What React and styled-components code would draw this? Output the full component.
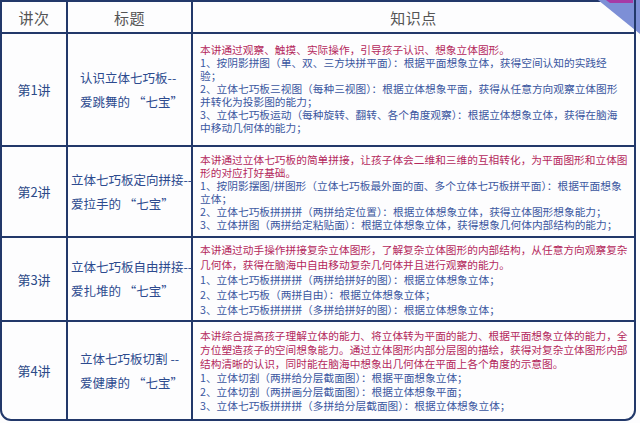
import React from "react";
import styled, { createGlobalStyle } from "styled-components";

const GlobalStyle = createGlobalStyle`
  html, body {
    margin: 0;
    padding: 0;
    background: #fdfdfe;
  }
  * {
    box-sizing: border-box;
  }
`;

const Page = styled.div({
    position: 'relative',
    width: '640px',
    height: '423px',
    fontFamily: '"Noto Sans CJK SC", "Noto Sans", sans-serif',
    overflow: 'hidden'
});

const Table = styled.div({
    width: '636px',
    border: '2px solid #22386a',
    borderRadius: '0 0 11px 11px',
    display: 'grid',
    gridTemplateColumns: '66px 125px 1fr',
    gridTemplateRows: '32px 113px 91px 84px 97px',
    overflow: 'hidden'
});

const Cell = styled.div`
    display: flex;
    align-items: center;
    justify-content: ${p => (p.$left ? 'flex-start' : 'center')};
    border-right: ${p => (p.$last ? 'none' : '2px solid #22386a')};
    border-bottom: ${p => (p.$bottom ? 'none' : '2px solid #22386a')};
    min-width: 0;
`;

const HeadText = styled.span({
    fontSize: '15px',
    color: '#555555',
    letterSpacing: '0.5px'
});

const LessonNo = styled.span({
    fontSize: '13px',
    color: '#2c4a88'
});

const TitleBlock = styled.div({
    display: 'flex',
    flexDirection: 'column',
    fontSize: '12.5px',
    lineHeight: '24px',
    color: '#2c4a8e',
    whiteSpace: 'nowrap',
    paddingLeft: '4px'
});

const Points = styled.div`
    padding-left: 7px;
    font-size: 10.7px;
    line-height: ${p => p.$lh}px;
    white-space: nowrap;
`;

const Line = styled.div`
    color: ${p => (p.$intro ? '#b4285c' : '#3a56a0')};
`;

const Corner = styled.svg({
    position: 'absolute',
    top: 0,
    right: 0
});

const lessons = [
    {
        no: '第1讲',
        title: ['认识立体七巧板--', '爱跳舞的 “七宝”'],
        lh: 12.9,
        intro: ['本讲通过观察、触摸、实际操作，引导孩子认识、想象立体图形。'],
        items: [
            '1、按阴影拼图（单、双、三方块拼平面）：根据平面想象立体，获得空间认知的实践经',
            '验；',
            '2、立体七巧板三视图（每种三视图）：根据立体想象平面，获得从任意方向观察立体图形',
            '并转化为投影图的能力；',
            '3、立体七巧板运动（每种旋转、翻转、各个角度观察）：根据立体想象立体，获得在脑海',
            '中移动几何体的能力；'
        ]
    },
    {
        no: '第2讲',
        title: ['立体七巧板定向拼接--', '爱拉手的 “七宝”'],
        lh: 13,
        intro: [
            '本讲通过立体七巧板的简单拼接，让孩子体会二维和三维的互相转化，为平面图形和立体图',
            '形的对应打好基础。'
        ],
        items: [
            '1、按阴影摆图/拼图形（立体七巧板最外面的面、多个立体七巧板拼平面）：根据平面想象',
            '立体；',
            '2、立体七巧板拼拼拼（两拼给定位置）：根据立体想象立体，获得立体图形想象能力；',
            '3、立体拼图（两拼给定粘贴面）：根据立体想象立体，获得想象几何体内部结构的能力；'
        ]
    },
    {
        no: '第3讲',
        title: ['立体七巧板自由拼接--', '爱扎堆的 “七宝”'],
        lh: 15,
        intro: [
            '本讲通过动手操作拼接复杂立体图形，了解复杂立体图形的内部结构，从任意方向观察复杂',
            '几何体，获得在脑海中自由移动复杂几何体并且进行观察的能力。'
        ],
        items: [
            '1、立体七巧板拼拼拼（两拼给拼好的图）：根据立体想象立体；',
            '2、立体七巧板（两拼自由）：根据立体想象立体；',
            '3、立体七巧板拼拼拼（多拼给拼好的图）：根据立体想象立体；'
        ]
    },
    {
        no: '第4讲',
        title: ['立体七巧板切割 --', '爱健康的 “七宝”'],
        lh: 14,
        intro: [
            '本讲综合提高孩子理解立体的能力、将立体转为平面的能力、根据平面想象立体的能力，全',
            '方位塑造孩子的空间想象能力。通过立体图形内部分层图的描绘，获得对复杂立体图形内部',
            '结构清晰的认识，同时能在脑海中想象出几何体在平面上各个角度的示意图。'
        ],
        items: [
            '1、立体切割（两拼给分层截面图）：根据平面想象立体；',
            '2、立体切割（两拼画分层截面图）：根据立体想象平面；',
            '3、立体七巧板拼拼拼（多拼给分层截面图）：根据立体想象立体；'
        ]
    }
];

const App = () => {
    return (
        <Page>
            <GlobalStyle />
            <Table>
                <Cell><HeadText>讲次</HeadText></Cell>
                <Cell><HeadText>标题</HeadText></Cell>
                <Cell $last><HeadText>知识点</HeadText></Cell>
                {lessons.map((l, i) => {
                    const bottom = i === lessons.length - 1;
                    return (
                        <React.Fragment key={l.no}>
                            <Cell $bottom={bottom}><LessonNo>{l.no}</LessonNo></Cell>
                            <Cell $bottom={bottom}>
                                <TitleBlock>
                                    {l.title.map(t => <span key={t}>{t}</span>)}
                                </TitleBlock>
                            </Cell>
                            <Cell $bottom={bottom} $last $left>
                                <Points $lh={l.lh}>
                                    {l.intro.map(t => <Line key={t} $intro>{t}</Line>)}
                                    {l.items.map(t => <Line key={t}>{t}</Line>)}
                                </Points>
                            </Cell>
                        </React.Fragment>
                    );
                })}
            </Table>
            <Corner width="42" height="34" viewBox="0 0 42 34">
                <polygon points="0,0 42,0 42,34" fill="#7d8fd6" />
                <polygon points="8,0 35,0 35,3 12,3" fill="#a63aa6" />
                <line x1="37" y1="0" x2="37" y2="34" stroke="#22386a" strokeWidth="2" />
            </Corner>
        </Page>
    );
};

export default App;
